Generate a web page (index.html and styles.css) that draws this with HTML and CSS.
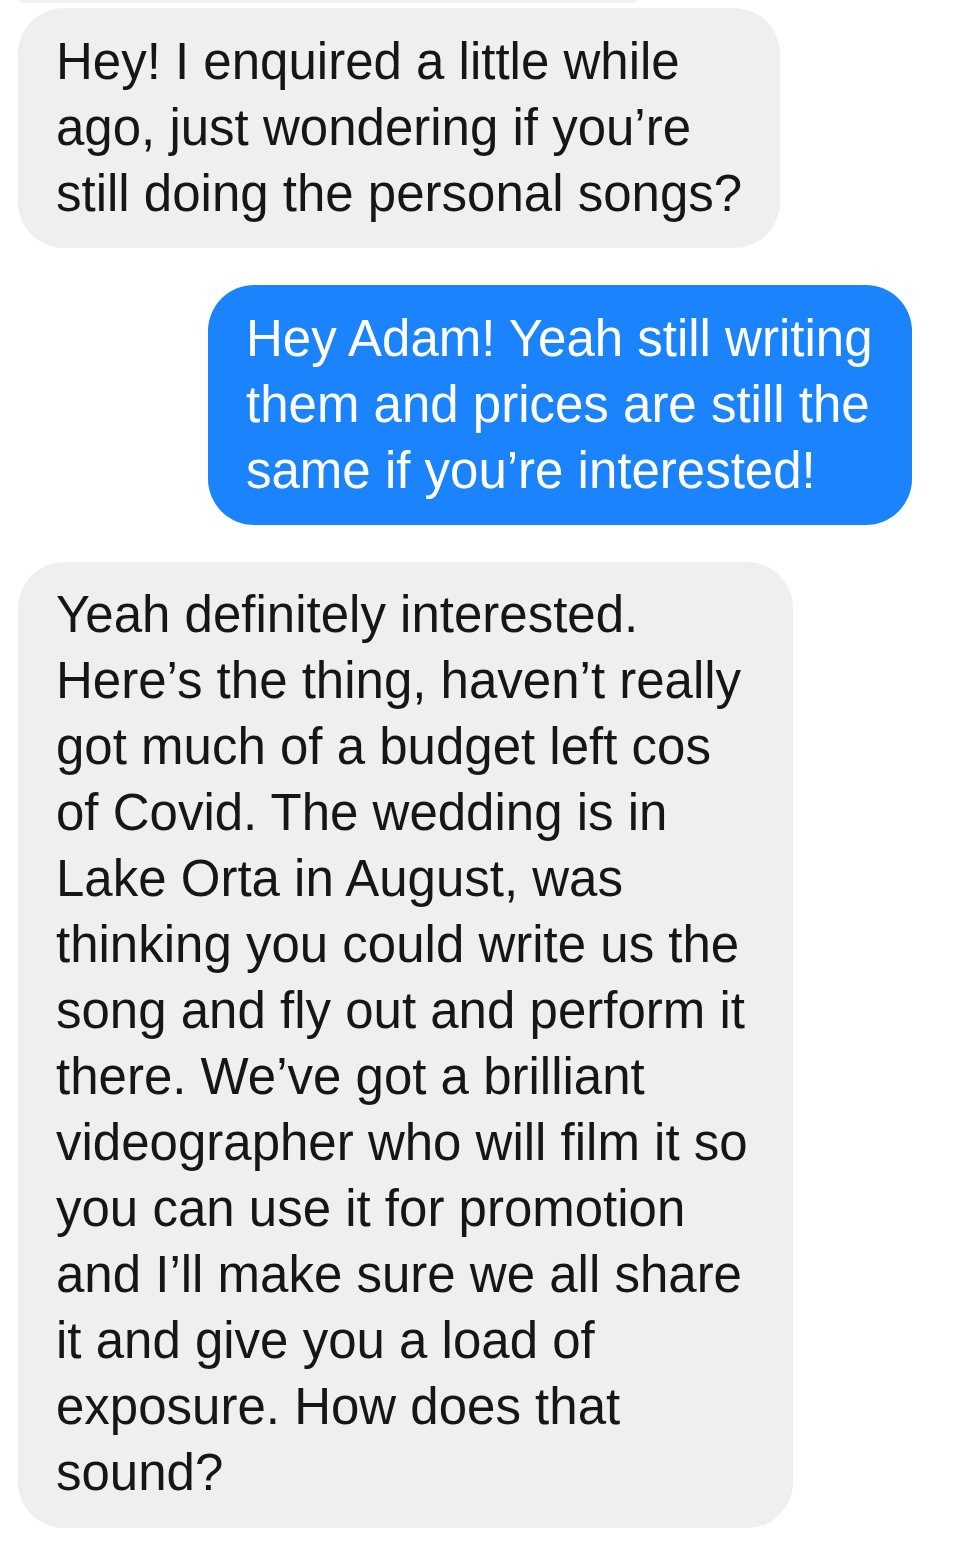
FILE: index.html
```html
<!DOCTYPE html>
<html>
<head>
<meta charset="utf-8">
<link rel="stylesheet" href="styles.css">
</head>
<body>
<div class="thread">
  <div class="prev"></div>
  <div class="bubble in b1">
    <span class="line">Hey! I enquired a little while</span>
    <span class="line">ago, just wondering if you’re</span>
    <span class="line">still doing the personal songs?</span>
  </div>
  <div class="bubble out b2">
    <span class="line">Hey Adam! Yeah still writing</span>
    <span class="line">them and prices are still the</span>
    <span class="line">same if you’re interested!</span>
  </div>
  <div class="bubble in b3">
    <span class="line">Yeah definitely interested.</span>
    <span class="line">Here’s the thing, haven’t really</span>
    <span class="line">got much of a budget left cos</span>
    <span class="line">of Covid. The wedding is in</span>
    <span class="line">Lake Orta in August, was</span>
    <span class="line">thinking you could write us the</span>
    <span class="line">song and fly out and perform it</span>
    <span class="line">there. We’ve got a brilliant</span>
    <span class="line">videographer who will film it so</span>
    <span class="line">you can use it for promotion</span>
    <span class="line">and I’ll make sure we all share</span>
    <span class="line">it and give you a load of</span>
    <span class="line">exposure. How does that</span>
    <span class="line">sound?</span>
  </div>
</div>
</body>
</html>
```

FILE: styles.css
```css
html, body {
  margin: 0;
  padding: 0;
  background: #ffffff;
}

.thread {
  display: flex;
  flex-direction: column;
  padding: 0 0 0 18px;
  font-family: "Liberation Sans", Arial, sans-serif;
  font-size: 51px;
  line-height: 66px;
  color: #161616;
}

.prev {
  width: 616px;
  height: 3px;
  margin-left: 2px;
  margin-bottom: 5px;
  background: #f2f2f2;
  border-radius: 0 0 40px 40px;
}

.bubble {
  box-sizing: border-box;
  padding: 21px 10px 21px 38px;
  border-radius: 46px;
}

.line {
  display: block;
  white-space: nowrap;
}

.in {
  background: #efefef;
  align-self: flex-start;
}

.out {
  background: #1b84fc;
  color: #ffffff;
  align-self: flex-end;
  margin-right: 52px;
}

.b1 {
  width: 762px;
  margin-bottom: 37px;
}

.b2 {
  width: 704px;
  margin-bottom: 37px;
}

.b3 {
  width: 775px;
  padding-top: 20px;
  padding-bottom: 22px;
}
```
